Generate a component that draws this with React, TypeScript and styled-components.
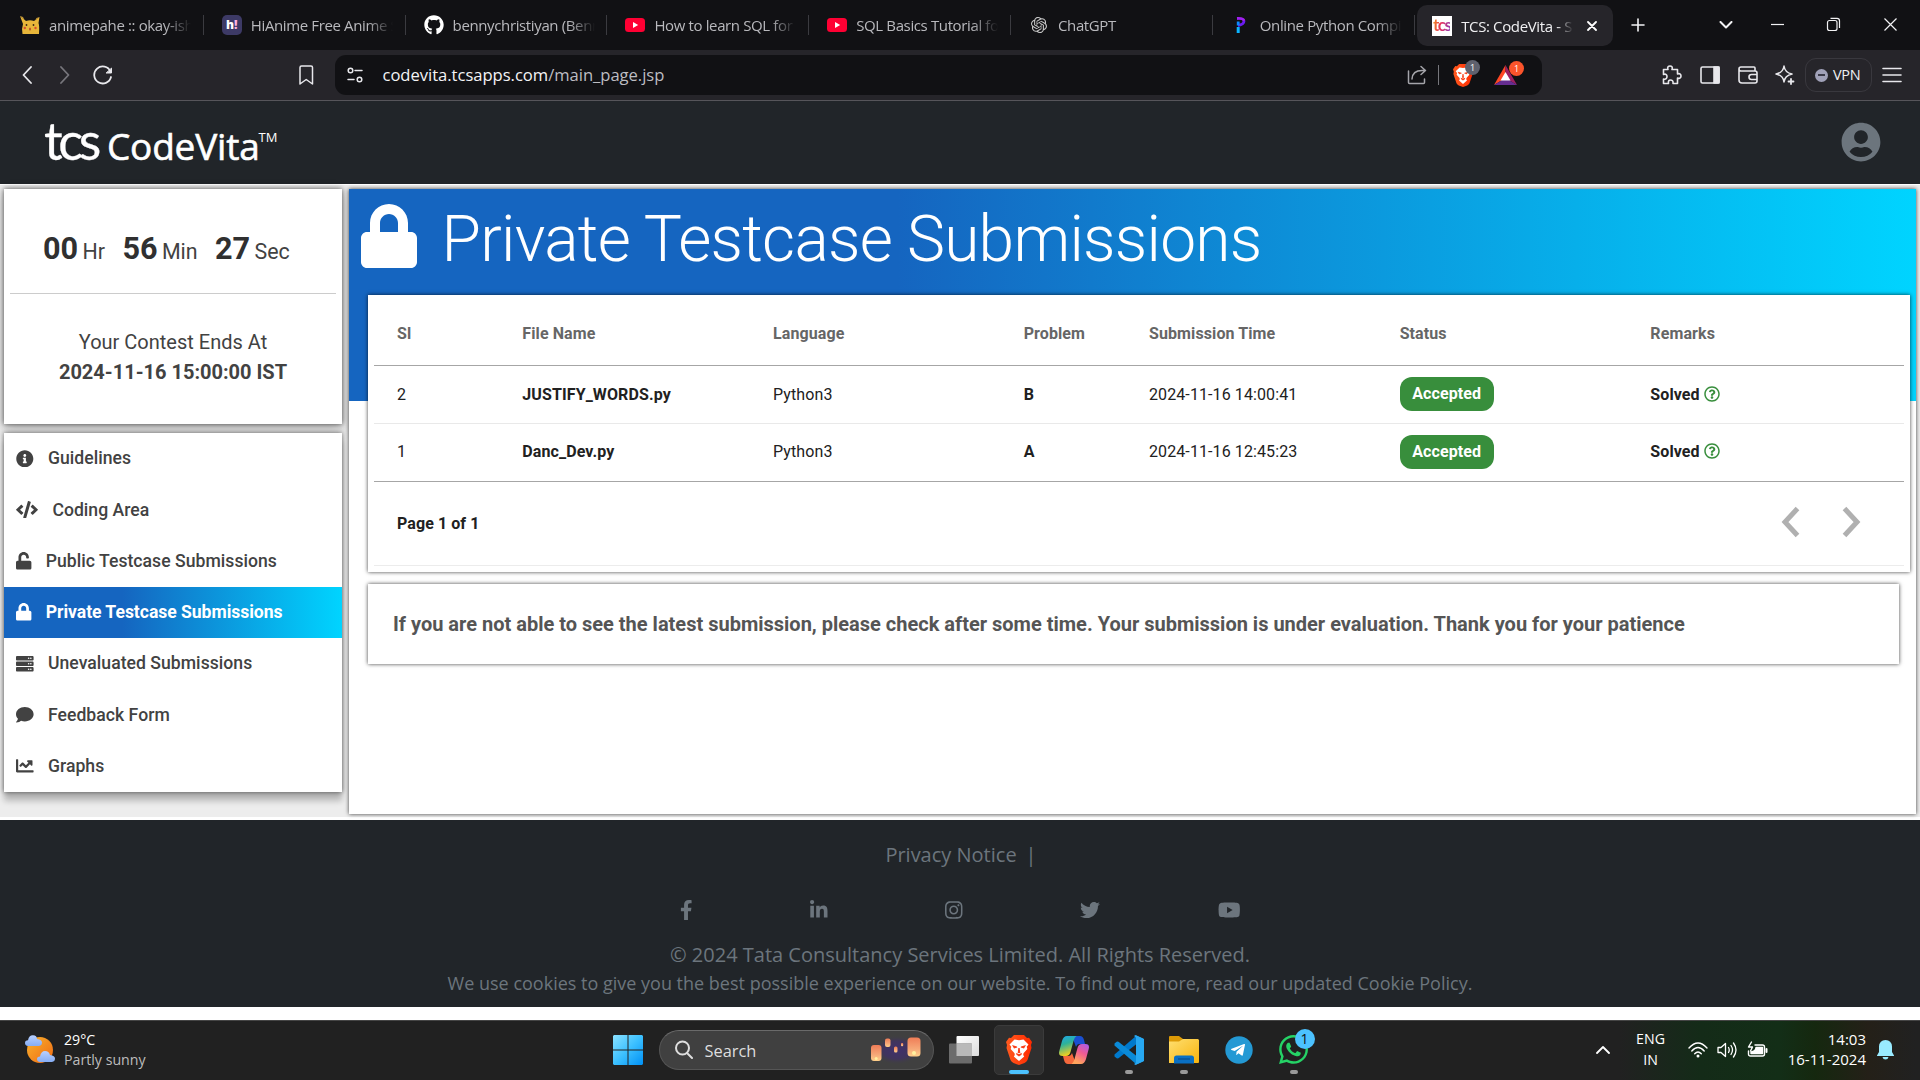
import React from 'react';
import styled, { createGlobalStyle, css } from 'styled-components';
import {
  FaInfoCircle, FaCode, FaUnlock, FaLock, FaServer, FaComment, FaChartLine,
  FaFacebookF, FaLinkedinIn, FaInstagram, FaTwitter, FaYoutube, FaGithub,
  FaUserCircle, FaRegQuestionCircle, FaTelegramPlane, FaWhatsapp,
} from 'react-icons/fa';
import { SiOpenai } from 'react-icons/si';

const UI = '"Open Sans", "Noto Sans", sans-serif';
const BLUE = 'linear-gradient(90deg, #1565c0 0%, #1565c0 35%, #00d4ff 100%)';

const Global = createGlobalStyle`
  * { box-sizing: border-box; }
  html, body { margin: 0; padding: 0; background: #fff; }
  body { font-family: Roboto, sans-serif; overflow: hidden; }
  svg { display: block; flex: none; }
`;

const Screen = styled.div`
  width: 1920px;
  height: 1080px;
  display: flex;
  flex-direction: column;
  overflow: hidden;
`;

/* ---------- browser: tab strip ---------- */
const TabStrip = styled.div`
  height: 50px;
  background: #111114;
  display: flex;
  align-items: center;
  padding-left: 2px;
  flex: none;
`;
const Tab = styled.div<{ $active?: boolean }>`
  width: 201.8px;
  height: 20px;
  padding-left: 18px;
  display: flex;
  align-items: center;
  gap: 9px;
  border-right: 1px solid #3b3b40;
  flex: none;
  ${p => p.$active && css`
    width: 196px;
    height: 41px;
    margin: 1px 0 0 2.600px;
    padding-left: 15px;
    border: 0;
    border-radius: 10px;
    background: #26252a;
  `}
`;
const Favicon = styled.span`
  width: 20px;
  height: 20px;
  display: grid;
  place-items: center;
  color: #fff;
  flex: none;
`;
const TabTitle = styled.span<{ $active?: boolean }>`
  font: 400 15px/22px ${UI};
  letter-spacing: -0.37px;
  color: ${p => (p.$active ? '#f0f0f2' : '#b9b9bd')};
  white-space: nowrap;
  overflow: hidden;
  width: ${p => (p.$active ? 117 : 145)}px;
  mask-image: linear-gradient(90deg, #000 ${p => (p.$active ? 82 : 80)}%, transparent ${p => (p.$active ? 96 : 98)}%);
`;
const HiBadge = styled.span`
  width: 20px;
  height: 20px;
  border-radius: 5px;
  background: #3d3a66;
  color: #fff;
  font: 800 12px/19px ${UI};
  text-align: center;
  i { font-style: normal; color: #ffb3e0; }
`;
const TcsBadge = styled.span`
  width: 20px;
  height: 20px;
  background: #fff;
  display: grid;
  place-items: center;
  span {
    font: 700 17px/18px Lato, sans-serif;
    letter-spacing: -1.5px;
    margin: -1px 0 0 -1px;
    color: transparent;
    background: linear-gradient(100deg, #f39c12, #e8305a 45%, #8a3ab9);
    background-clip: text;
  }
`;
const WindowControls = styled.div`
  display: flex;
  align-items: center;
  margin-left: 15px;
  color: #f2f2f4;
`;
const CaptionButtons = styled.div`
  margin-left: -34px;
`;
const Slot = styled.span<{ $w: number; $icon?: number }>`
  width: ${p => p.$w}px;
  display: grid;
  place-items: center;
  flex: none;
  ${p => p.$icon && css`svg { width: ${p.$icon}px; height: 20px; }`}
`;

/* ---------- browser: toolbar ---------- */
const Toolbar = styled.div`
  height: 51px;
  background: #26252a;
  border-bottom: 1px solid #56555a;
  display: flex;
  align-items: center;
  padding-left: 9px;
  color: #e8e8ec;
  flex: none;
`;
const UrlBar = styled.div`
  width: 1207px;
  height: 40px;
  margin-left: 3px;
  border-radius: 11px;
  background: #111114;
  display: flex;
  align-items: center;
  padding: 0 22px 0 12px;
`;
const Url = styled.span`
  font: 400 16.6px/24px ${UI};
  letter-spacing: -0.03px;
  margin: 0 auto 0 19.500px;
  color: #bdbdc2;
  b { font-weight: 400; color: #f4f4f6; }
`;
const BarRule = styled.span`
  width: 1px;
  height: 20px;
  margin: 0 14px 0 11px;
  background: #77777c;
`;
const BadgeHost = styled.span<{ $gap?: number }>`
  position: relative;
  margin-left: ${p => p.$gap ?? 0}px;
  margin-right: 3px;
`;
const CountBadge = styled.span<{ $bg: string }>`
  position: absolute;
  top: -4px;
  right: -7px;
  width: 15px;
  height: 15px;
  border-radius: 8px;
  background: ${p => p.$bg};
  color: #fff;
  font: 400 9px/15px ${UI};
  text-align: center;
`;
const Actions = styled.div`
  display: flex;
  align-items: center;
  margin-left: 117px;
`;
const VpnPill = styled.div`
  width: 67px;
  height: 34px;
  margin: 0 10px 0 -5px;
  border: 1px solid #39383e;
  border-radius: 11px;
  display: flex;
  align-items: center;
  gap: 5px;
  padding-left: 9px;
  font: 400 14.500px/20px ${UI};
  letter-spacing: -0.3px;
  color: #f0f0f3;
`;
const VpnDot = styled.i`
  width: 13px;
  height: 13px;
  border-radius: 50%;
  background: #a0a1b8;
  display: grid;
  place-items: center;
  &::after { content: ''; width: 7px; height: 2px; background: #3a3a48; }
`;

/* ---------- site header ---------- */
const SiteHeader = styled.header`
  height: 83px;
  background: #212529;
  display: flex;
  align-items: center;
  justify-content: space-between;
  padding: 0 39px 0 44px;
  flex: none;
  > svg { margin-top: -2px; }
`;
const Logo = styled.div`
  height: 83px;
  display: flex;
  align-items: baseline;
  padding-top: 9px;
  color: #fff;
`;
const LogoTcs = styled.span`
  font: 400 52px/60px Lato, sans-serif;
  letter-spacing: -4.3px;
  width: 63px;
  -webkit-text-stroke: 0.3px #fff;
`;
const LogoName = styled.span`
  font: 500 37px/60px ${UI};
  letter-spacing: -0.2px;
  -webkit-text-stroke: 0.6px #fff;
`;
const LogoTm = styled.sup`
  font: 400 13px/13px ${UI};
  align-self: flex-start;
  margin: 21px 0 0 -1px;
`;

/* ---------- body ---------- */
const Body = styled.main`
  height: 636px;
  background: #ededed;
  border-top: 1px solid #fff;
  border-bottom: 3px solid #fff;
  display: flex;
  padding: 4px 4px 3px;
  gap: 7px;
  flex: none;
`;
const Sidebar = styled.aside`
  width: 338px;
  display: flex;
  flex-direction: column;
  gap: 9px;
`;
const TimerCard = styled.section`
  height: 235px;
  background: #fff;
  padding: 0 6px;
  color: #424242;
  box-shadow: 0 0 5px rgba(0, 0, 0, 0.6), 0 4px 12px rgba(0, 0, 0, 0.28);
`;
const Countdown = styled.div`
  height: 105px;
  border-bottom: 1px solid #ccc;
  display: flex;
  align-items: baseline;
  padding: 42px 0 0 33px;
  line-height: 36px;
`;
const Digits = styled.b`
  font-weight: 700;
  font-size: 30.6px;
  color: #303030;
`;
const Unit = styled.span`
  font-size: 21.4px;
  margin: 0 17.4px 0 4.4px;
`;
const EndsAt = styled.div`
  padding-top: 33px;
  font-size: 20px;
  line-height: 30px;
  text-align: center;
  b { display: block; }
`;
const Nav = styled.nav`
  background: #fff;
  box-shadow: 0 0 5px rgba(0, 0, 0, 0.6), 0 9px 6px rgba(0, 0, 0, 0.22);
`;
const NavItem = styled.a<{ $active?: boolean; $iw: number }>`
  height: 51.25px;
  display: flex;
  align-items: center;
  gap: 14.2px;
  padding: 0 0 0.6px 12.2px;
  font-size: 17.6px;
  font-weight: ${p => (p.$active ? 700 : 500)};
  letter-spacing: ${p => (p.$active ? -0.05 : 0.03)}px;
  color: ${p => (p.$active ? '#fff' : '#424242')};
  background: ${p => (p.$active ? BLUE : 'transparent')};
  svg { height: 17.6px; width: ${p => p.$iw}px; }
`;

const Content = styled.section`
  width: 1567px;
  height: 625px;
  background: linear-gradient(#fff, #fff) 0 212px / 100% 100% no-repeat, ${BLUE};
  box-shadow: 0 0 4px rgba(0, 0, 0, 0.75);
  padding-left: 19px;
`;
const Banner = styled.h1`
  height: 106px;
  margin: 0 0 0 -7px;
  padding-top: 16px;
  display: flex;
  gap: 24.5px;
  color: #fff;
  font: 300 64px/70px Roboto, sans-serif;
  letter-spacing: -0.72px;
  svg { width: 56px; height: 64px; margin-top: -1px; }
`;
const cardShadow = css`
  background: #fff;
  box-shadow: 0 0 4px rgba(0, 0, 0, 0.75);
`;
const TableCard = styled.div`
  width: 1542px;
  height: 277px;
  padding: 0 6px;
  ${cardShadow}
`;
const Row = styled.div<{ $h: number; $line: string; $lift?: number }>`
  height: ${p => p.$h}px;
  border-bottom: 1px solid ${p => p.$line};
  display: grid;
  grid-template-columns: 1fr 2fr 2fr 1fr 2fr 2fr 2fr;
  align-items: center;
  padding: 0 3px 1px 23px;
  font-size: 16px;
  letter-spacing: 0.1px;
  color: #212121;
  > *:not(:nth-child(6)) { margin-bottom: ${p => p.$lift ?? 0}px; }
`;
const Head = styled(Row)`
  font-weight: 700;
  color: #666;
  padding-top: 6px;
  padding-bottom: 0;
`;
const Strong = styled.b`
  display: flex;
  align-items: center;
  gap: 4px;
  font-weight: 700;
  svg { color: #388e3c; width: 16px; height: 16px; }
`;
const Accepted = styled.span`
  justify-self: start;
  width: 94px;
  height: 34px;
  border-radius: 12px;
  background: #388e3c;
  color: #fff;
  font-weight: 700;
  line-height: 34.6px;
  text-align: center;
`;
const Pager = styled.div`
  height: 84px;
  border-bottom: 1px solid #ececec;
  display: flex;
  align-items: center;
  justify-content: space-between;
  padding: 0 43px 0 23px;
  font-size: 16px;
  letter-spacing: 0.08px;
  font-weight: 700;
  color: #212121;
`;
const Arrows = styled.div`
  display: flex;
  gap: 42px;
  padding-bottom: 3px;
`;
const Notice = styled.div`
  width: 1531px;
  height: 80px;
  margin-top: 12px;
  padding-left: 25px;
  font-size: 20px;
  font-weight: 700;
  line-height: 80px;
  color: #555;
  ${cardShadow}
`;

/* ---------- footer ---------- */
const Footer = styled.footer`
  height: 187px;
  background: #212529;
  color: #6c757d;
  font-family: "Open Sans", sans-serif;
  text-align: center;
  padding-top: 20px;
  flex: none;
`;
const FooterLine = styled.p<{ $size: number; $h: number }>`
  margin: 0;
  font-size: ${p => p.$size}px;
  line-height: ${p => p.$h}px;
  span { margin: 0 -2px 0 9px; }
`;
const Socials = styled.div`
  display: flex;
  justify-content: center;
  align-items: center;
  height: 50px;
  margin: 15px 0 5px;
`;

/* ---------- taskbar ---------- */
const Taskbar = styled.div`
  height: 60px;
  margin-top: 13px;
  padding-bottom: 2px;
  border-top: 1px solid #454545;
  background: linear-gradient(90deg, #212121 0 1620px, #142b18 1700px, #132e17 1780px, #15280f 1815px, #242018 1868px, #212121 1915px);
  display: flex;
  align-items: center;
  font-family: ${UI};
  color: #fff;
  flex: none;
`;
const Weather = styled.div`
  width: 612.5px;
  display: flex;
  align-items: center;
  padding-left: 24px;
  gap: 8px;
`;
const TwoLine = styled.div<{ $size: number; $line?: number; $dim?: boolean }>`
  font-size: ${p => p.$size}px;
  line-height: ${p => p.$line ?? 20}px;
  div + div { color: ${p => (p.$dim ? '#bdbdbd' : 'inherit')}; }
`;
const Language = styled(TwoLine)`
  margin-left: 26px;
  text-align: center;
`;
const Clock = styled(TwoLine)`
  width: 98px;
  padding-bottom: 1px;
  text-align: right;
`;
const SearchBox = styled.div`
  width: 275px;
  height: 40px;
  margin: 0 5px 0 16px;
  border: 1px solid #555;
  border-top-color: #6a6a6a;
  border-radius: 20px;
  background: #404040;
  display: flex;
  align-items: center;
  padding: 0 12px 0 14px;
  font-size: 16.4px;
  color: #dedede;
  span { margin: 1px auto 0 12px; }
`;
const AppSlot = styled.div<{ $mark?: 'active' | 'open' }>`
  position: relative;
  width: 50px;
  height: 50px;
  margin-right: 5px;
  display: grid;
  place-items: center;
  border-radius: 5px;
  flex: none;
  ${p => p.$mark === 'active' && css`background: #303030; border: 1px solid #3b3b3b;`}
  &::after {
    content: ${p => (p.$mark ? "''" : 'none')};
    position: absolute;
    bottom: ${p => (p.$mark === 'active' ? 0 : 1)}px;
    left: 50%;
    width: ${p => (p.$mark === 'active' ? 20 : 8)}px;
    height: 4px;
    transform: translateX(-50%);
    border-radius: 2px;
    background: ${p => (p.$mark === 'active' ? '#4cc2ff' : '#9a9a9a')};
  }
`;
const AppBadge = styled.span`
  position: absolute;
  top: 4px;
  right: 4px;
  width: 20px;
  height: 20px;
  border-radius: 50%;
  background: #4cc2ff;
  color: #111;
  font-size: 14px;
  line-height: 20px;
  text-align: center;
`;
const Tray = styled.div`
  margin-left: auto;
  display: flex;
  align-items: center;
  padding-right: 26px;
`;
const TrayIcons = styled.div`
  display: flex;
  align-items: center;
  gap: 9px;
  margin-left: 23px;
`;
const Bell = styled.svg`
  margin-left: 11px;
`;

/* ---------- drawings ---------- */
const line = { fill: 'none', stroke: 'currentColor', strokeLinecap: 'round', strokeLinejoin: 'round' } as const;

const Pikachu = () => (
  <svg width="20" height="18" viewBox="0 0 20 18">
    <path d="M0 0l6 5q4-1.500 8 0l5.500-4-1 6q1 2 .500 11H2.500Q1.500 12 3 8z" fill="#e8b63a" />
    <path d="M0 0l3 1 1.500 3zM19.500 1l-3 1-1.500 3z" fill="#c79a3a" />
    <circle cx="6.500" cy="9" r=".9" fill="#3b2714" /><circle cx="13.500" cy="9" r=".9" fill="#3b2714" />
    <circle cx="4.800" cy="12" r="1.200" fill="#d8502c" /><circle cx="15.500" cy="12" r="1.200" fill="#d8502c" />
    <ellipse cx="10" cy="13" rx="1" ry="1.500" fill="#b8502c" />
  </svg>
);
const TubeIcon = () => (
  <svg width="20" height="14" viewBox="0 0 20 14"><rect width="20" height="14" rx="3.500" fill="#ff0033" /><path d="M8 4l5.200 3L8 10z" fill="#fff" /></svg>
);
const Programiz = () => (
  <svg width="10" height="16" viewBox="0 0 10 16">
    <path d="M1 1.500q6.500-.500 7 2.500" fill="none" stroke="#a020f0" strokeWidth="2.800" />
    <path d="M8 4q0 3.500-6 4.500" fill="none" stroke="#6a1cf0" strokeWidth="2.800" />
    <path d="M2.200 4.500v4" stroke="#0a8aff" strokeWidth="2.800" /><path d="M2.200 10v6" stroke="#0ab4ff" strokeWidth="3" />
  </svg>
);
const Lion = ({ w, h }: { w: number; h: number }) => (
  <svg width={w} height={h} viewBox="0 0 26 30">
    <defs><linearGradient id="lion" x2="1"><stop stopColor="#ff5a1f" /><stop offset="1" stopColor="#ff2a00" /></linearGradient></defs>
    <path d="M8 0h10l3 3 2-.300L26 7l-1 3 .500 3-4 12q-1 2-3 3l-5.500 2-5.500-2q-2-1-3-3L.500 13 1 10 0 7l3-4.300L5 3z" fill="url(#lion)" />
    <path d="M8.500 4.500L13 5.200l4.500-.700 5 5-1.800 2.300.600 2.200-3.800 4.200-.300 1.800 1 1.500-5.200 4.500-5.200-4.500 1-1.500-.300-1.800L4.700 14l.600-2.200L3.500 9.500z" fill="#fff" />
    <path d="M6 10l5 1.500.300 1-3.300 1zM20 10l-5 1.500-.300 1 3.300 1zM10 18l3 1 3-1-.500 1.800-2.500 1.700-2.500-1.700zM12.300 13h1.400l.600 5h-2.600z" fill="#f9401a" />
  </svg>
);
const Bat = () => (
  <svg width="23" height="20" viewBox="0 0 23 20">
    <path d="M11.500 0L0 20l11.500-7z" fill="#ff4724" /><path d="M11.500 0L23 20l-11.500-7z" fill="#9e1f63" />
    <path d="M0 20h23l-11.500-7z" fill="#662d91" /><path d="M11.500 7L6.500 15.500h10z" fill="#fff" />
  </svg>
);
const WinLogo = () => (
  <svg width="30" height="30" viewBox="0 0 30 30">
    <defs><linearGradient id="win" x2="1" y2="1"><stop stopColor="#8be2ff" /><stop offset=".5" stopColor="#3cc0ff" /><stop offset="1" stopColor="#0090f5" /></linearGradient></defs>
    <path d="M1 0h13.500v14.500H0V1zM15.500 0H29l1 1v13.500H15.500zM0 15.500h14.500V30H1l-1-1zM15.500 15.500H30V29l-1 1H15.500z" fill="url(#win)" />
  </svg>
);
const Lanterns = () => (
  <svg width="52" height="30" viewBox="0 0 52 30">
    <defs>
      <linearGradient id="lan" y2="1" x2="0"><stop stopColor="#ef7d57" /><stop offset=".6" stopColor="#f6a878" /><stop offset="1" stopColor="#ffd08a" /></linearGradient>
      <radialGradient id="glow"><stop stopColor="#40306c" /><stop offset=".6" stopColor="#40345c" /><stop offset="1" stopColor="#404040" stopOpacity="0" /></radialGradient>
    </defs>
    <ellipse cx="28" cy="15" rx="24" ry="15" fill="url(#glow)" />
    <rect x="2" y="10" width="10.500" height="16" rx="3" fill="url(#lan)" />
    <rect x="16" y="3.500" width="5.500" height="8.500" rx="2" fill="url(#lan)" />
    <rect x="25" y="11.500" width="3.500" height="6" rx="1.500" fill="url(#lan)" />
    <rect x="32" y="8" width="2.200" height="3.200" rx="1" fill="url(#lan)" />
    <rect x="38.500" y="2.500" width="13" height="19" rx="3.500" fill="url(#lan)" />
    <circle cx="7.200" cy="23.500" r="1.500" fill="#fff0a0" /><circle cx="45" cy="18" r="2" fill="#fff0a0" />
  </svg>
);
const TaskView = () => (
  <svg width="30" height="28" viewBox="0 0 30 28">
    <defs><linearGradient id="tv" x2="1" y2="1"><stop stopColor="#fff" /><stop offset="1" stopColor="#dcdcdc" /></linearGradient></defs>
    <rect x="7.500" width="22.500" height="20" rx="1" fill="url(#tv)" /><rect y="7.500" width="23" height="20" rx="1" fill="#6c6c6c" />
    <rect x="7.500" y="7.500" width="15.500" height="12.500" fill="#b9b9b9" />
  </svg>
);
const Copilot = () => (
  <svg width="30" height="28" viewBox="0 0 30 28">
    <defs>
      <linearGradient id="cp1" x2=".3" y2="1"><stop stopColor="#1fa6ee" /><stop offset=".45" stopColor="#2cb29a" /><stop offset="1" stopColor="#f0d020" /></linearGradient>
      <linearGradient id="cp2" x1="1" x2=".5" y2="1"><stop stopColor="#a35cf0" /><stop offset=".5" stopColor="#ee5a94" /><stop offset="1" stopColor="#ffa45c" /></linearGradient>
    </defs>
    <path d="M13 0h8q3 0 4 4l1 4h-6q-2 0-3 3z" fill="#1a4fd0" />
    <path d="M17 28H9q-3 0-4-4l-1-4h6q2 0 3-3z" fill="#f4683c" />
    <path d="M8 0h9.500q-2 1-3 5l-3 11q-1 4-4.500 4H3.500Q-1 20 .300 15L3 5q1.500-5 5-5z" fill="url(#cp1)" />
    <path d="M22 28h-9.500q2-1 3-5l3-11q1-4 4.500-4h3.500q4.500 0 3.200 5L27 23q-1.500 5-5 5z" fill="url(#cp2)" />
  </svg>
);
const VsCode = () => (
  <svg width="30" height="30" viewBox="0 0 30 30">
    <path d="M22 1L0.500 19.500v2L3 23.500l1.500-.200L22.500 9z" fill="#0079cc" />
    <path d="M22 29L.500 10.500v-2L3 6.500l1.500.200L22.500 21z" fill="#0a8ad8" />
    <path d="M21.500 0L29 3.500l1 1.200v20.600l-1 1.200L21.500 30l-1.500-1 2.500-1.500V3L20 1z" fill="#27a8f2" />
    <path d="M22 .500v29l8-3.500V4z" fill="#27a8f2" />
  </svg>
);
const Folder = () => (
  <svg width="30" height="28" viewBox="0 0 30 28">
    <defs><linearGradient id="fo" x2="1" y2="1"><stop stopColor="#ffdf70" /><stop offset="1" stopColor="#f8b40e" /></linearGradient></defs>
    <path d="M0 1q0-1 1-1h9l4 3v6H0z" fill="#dd9a06" /><path d="M0 5.500h10l4-2.500h15l1 1v22.500l-1 .500H1L0 27z" fill="url(#fo)" />
    <path d="M5 27.500V22q0-2.500 2.500-2.500h15Q25 19.500 25 22v5.500z" fill="#0a70c4" /><path d="M9 23h12" stroke="#0a4c8c" strokeWidth="1.200" />
  </svg>
);
const WeatherIcon = () => (
  <svg width="32" height="30" viewBox="0 0 32 30">
    <defs>
      <linearGradient id="sun" x2="1" y2="1"><stop stopColor="#f9b22c" /><stop offset="1" stopColor="#ef6a14" /></linearGradient>
      <linearGradient id="cl" x2="0" y2="1"><stop stopColor="#b8d0ff" /><stop offset="1" stopColor="#86adf4" /></linearGradient>
    </defs>
    <circle cx="16" cy="15" r="13" fill="url(#sun)" />
    <path d="M4 11q-3-.500-3-3t3-2.700Q5 0 9 .200T13 4q5 .500 5 3.500T15 11z" fill="url(#cl)" />
    <path d="M16 27q-3-.500-3-3t3-2.500Q17 16 21 16t5 4q5 .500 5 3.500T28 27z" fill="url(#cl)" />
  </svg>
);

const tabs: { icon: React.ReactNode; title: string }[] = [
  { icon: <Pikachu />, title: 'animepahe :: okay-ish' },
  { icon: <HiBadge>h<i>!</i></HiBadge>, title: 'HiAnime Free Anime S' },
  { icon: <FaGithub size={20} />, title: 'bennychristiyan (Benn' },
  { icon: <TubeIcon />, title: 'How to learn SQL for' },
  { icon: <TubeIcon />, title: 'SQL Basics Tutorial fo' },
  { icon: <SiOpenai size={16} color="#c9c9c9" />, title: 'ChatGPT' },
  { icon: <Programiz />, title: 'Online Python Compi' },
];

const nav = [
  { icon: <FaInfoCircle />, w: 17.6, label: 'Guidelines' },
  { icon: <FaCode />, w: 22, label: 'Coding Area' },
  { icon: <FaUnlock />, w: 15.4, label: 'Public Testcase Submissions' },
  { icon: <FaLock />, w: 15.4, label: 'Private Testcase Submissions', active: true },
  { icon: <FaServer />, w: 17.6, label: 'Unevaluated Submissions' },
  { icon: <FaComment />, w: 17.6, label: 'Feedback Form' },
  { icon: <FaChartLine />, w: 17.6, label: 'Graphs' },
];

const submissions = [
  { sl: 2, file: 'JUSTIFY_WORDS.py', problem: 'B', time: '2024-11-16 14:00:41' },
  { sl: 1, file: 'Danc_Dev.py', problem: 'A', time: '2024-11-16 12:45:23' },
];

function BrowserChrome() {
  return (
    <>
      <TabStrip>
        {tabs.map(t => (
          <Tab key={t.title}><Favicon>{t.icon}</Favicon><TabTitle>{t.title}</TabTitle></Tab>
        ))}
        <Tab $active>
          <Favicon><TcsBadge><span>tcs</span></TcsBadge></Favicon>
          <TabTitle $active>TCS: CodeVita - S</TabTitle>
          <svg width="10" height="10" viewBox="0 0 10 10" {...line} stroke="#fff" strokeWidth="1.800"><path d="M1 1l8 8M9 1L1 9" /></svg>
        </Tab>
        <WindowControls>
          <Slot $w={20}><svg width="14" height="14" viewBox="0 0 14 14" {...line} strokeWidth="1.600"><path d="M7 1v12M1 7h12" /></svg></Slot>
          <Slot $w={156}><svg width="14" height="8" viewBox="0 0 14 8" {...line} strokeWidth="2"><path d="M1.500 1L7 6.500 12.500 1" /></svg></Slot>
          <CaptionButtons>
            <svg width="127" height="16" viewBox="0 0 127 16" {...line} strokeWidth="1.200" strokeLinecap="butt">
              <path d="M1 7.500h13" />
              <rect x="57.500" y="3.500" width="9.500" height="10" rx="2" /><path d="M60.500 1.300H67q2.500 0 2.500 2.500V11" />
              <path d="M114.500 1.500l12 12M126.500 1.500l-12 12" />
            </svg>
          </CaptionButtons>
        </WindowControls>
      </TabStrip>
      <Toolbar>
        <Slot $w={36}><svg width="10" height="18" viewBox="0 0 10 18" {...line} strokeWidth="1.800"><path d="M9 1L1.500 9 9 17" /></svg></Slot>
        <Slot $w={40}><svg width="10" height="18" viewBox="0 0 10 18" {...line} stroke="#77767c" strokeWidth="1.800"><path d="M1 1l7.500 8L1 17" /></svg></Slot>
        <Slot $w={36}><svg width="20" height="20" viewBox="0 0 20 20" {...line} strokeWidth="1.800"><path d="M17.500 6.500A8.500 8.500 0 1 0 18 12" /><path d="M18.500 3.500V8h-5z" fill="currentColor" strokeWidth="1" /></svg></Slot>
        <Slot $w={169} /><Slot $w={32}><svg width="16" height="20" viewBox="0 0 16 20" {...line} strokeWidth="1.500"><path d="M2 2.500Q2 1 3.500 1h9.500q1.500 0 1.500 1.500V19L8.200 14.500 2 19z" /></svg></Slot>
        <Slot $w={10} />
        <UrlBar>
          <svg width="16" height="16" viewBox="0 0 16 16" {...line} strokeWidth="1.500"><circle cx="3.500" cy="3.500" r="2.300" /><path d="M8 3.500h7M1 12.500h6" /><circle cx="12.500" cy="12.500" r="2.300" /></svg>
          <Url><b>codevita.tcsapps.com</b>/main_page.jsp</Url>
          <svg width="20" height="20" viewBox="0 0 20 20" {...line} stroke="#a5a5aa" strokeWidth="1.500"><path d="M1.500 6v11.500q0 1 1 1h14q1 0 1-1V14" /><path d="M5 14q.500-8.500 10-8.500h3.500M14 1.500l4.500 4-4.500 4" /></svg>
          <BarRule />
          <BadgeHost><Lion w={20} h={23} /><CountBadge $bg="#5f616e">1</CountBadge></BadgeHost>
          <BadgeHost $gap={18}><Bat /><CountBadge $bg="#fb542b">1</CountBadge></BadgeHost>
        </UrlBar>
        <Actions>
          <Slot $w={26}><svg width="20" height="20" viewBox="0 0 20 20" {...line} strokeWidth="1.600"><path d="M1.500 4.500H6C5 2 6.500 1 8 1s3 1 2 3.500h5.500V9c2.500-1 3.500.500 3.500 2s-1 3-3.500 2v5.500h-4.500C11.500 16 10 15 8.500 15S6 16 6.500 18.500H1.500V14c2.500 1 3.500-1 3.500-2.500S4 8.500 1.500 9.500z" /></svg></Slot>
          <Slot $w={50}><svg width="20" height="18" viewBox="0 0 20 18" {...line} strokeWidth="1.600"><rect x="1" y="1" width="18" height="16" rx="1.500" /><path d="M14 1h5v16h-5z" fill="currentColor" /></svg></Slot>
          <Slot $w={25}><svg width="20" height="18" viewBox="0 0 20 18" {...line} strokeWidth="1.600"><path d="M17 5V2q0-1-1-1H3Q1 1 1 3t2 2h14q2 0 2 2v8q0 2-2 2H4q-3 0-3-3V3M19 8.500h-5.500a2.500 2.500 0 0 0 0 5H19" /></svg></Slot>
          <Slot $w={50}><svg width="20" height="20" viewBox="0 0 20 20" {...line} strokeWidth="1.500"><path d="M9 1q.800 6.500 8 8-7.200 1.500-8 8-.800-6.500-8-8 7.200-1.500 8-8z" /><path d="M16 14v5M13.500 16.500h5" strokeWidth="1.800" /></svg></Slot>
          <VpnPill><VpnDot />VPN</VpnPill>
          <svg width="20" height="16" viewBox="0 0 20 16" {...line} strokeWidth="1.600"><path d="M1 1.500h18M1 8h18M1 14.500h18" /></svg>
        </Actions>
      </Toolbar>
    </>
  );
}

export default function App() {
  return (
    <Screen>
      <Global />
      <BrowserChrome />
      <SiteHeader>
        <Logo><LogoTcs>tcs</LogoTcs><LogoName>CodeVita</LogoName><LogoTm>TM</LogoTm></Logo>
        <FaUserCircle size={40} color="#6c757d" />
      </SiteHeader>
      <Body>
        <Sidebar>
          <TimerCard>
            <Countdown>
              <Digits>00</Digits><Unit>Hr</Unit>
              <Digits>56</Digits><Unit>Min</Unit>
              <Digits>27</Digits><Unit>Sec</Unit>
            </Countdown>
            <EndsAt>Your Contest Ends At<b>2024-11-16 15:00:00 IST</b></EndsAt>
          </TimerCard>
          <Nav>
            {nav.map(n => <NavItem key={n.label} $active={n.active} $iw={n.w}>{n.icon}{n.label}</NavItem>)}
          </Nav>
        </Sidebar>
        <Content>
          <Banner><FaLock />Private Testcase Submissions</Banner>
          <TableCard>
            <Head $h={71} $line="#a6a6a6">
              <span>Sl</span><span>File Name</span><span>Language</span><span>Problem</span>
              <span>Submission Time</span><span>Status</span><span>Remarks</span>
            </Head>
            {submissions.map((s, i) => (
              <Row key={s.sl} $h={58} $line={i === 0 ? '#e9e9e9' : '#a6a6a6'} $lift={i * 2}>
                <span>{s.sl}</span><Strong>{s.file}</Strong><span>Python3</span><Strong>{s.problem}</Strong>
                <span>{s.time}</span><Accepted>Accepted</Accepted><Strong>Solved<FaRegQuestionCircle /></Strong>
              </Row>
            ))}
            <Pager>
              Page 1 of 1
              <Arrows>
                <svg width="19" height="32" viewBox="0 0 19 32"><path d="M16.500 2.500L4 16l12.500 13.500" fill="none" stroke="#b0b0b0" strokeWidth="5" /></svg>
                <svg width="19" height="32" viewBox="0 0 19 32"><path d="M2.500 2.500L15 16 2.500 29.500" fill="none" stroke="#b0b0b0" strokeWidth="5" /></svg>
              </Arrows>
            </Pager>
          </TableCard>
          <Notice>If you are not able to see the latest submission, please check after some time. Your submission is under evaluation. Thank you for your patience</Notice>
        </Content>
      </Body>
      <Footer>
        <FooterLine $size={20} $h={30}>Privacy Notice<span>|</span></FooterLine>
        <Socials>
          <Slot $w={133} $icon={12.5}><FaFacebookF /></Slot>
          <Slot $w={133} $icon={17.5}><FaLinkedinIn /></Slot>
          <Slot $w={137} $icon={17.5}><FaInstagram /></Slot>
          <Slot $w={135} $icon={20}><FaTwitter /></Slot>
          <Slot $w={143} $icon={22.5}><FaYoutube /></Slot>
        </Socials>
        <FooterLine $size={20} $h={29}>© 2024 Tata Consultancy Services Limited. All Rights Reserved.</FooterLine>
        <FooterLine $size={18} $h={28}>We use cookies to give you the best possible experience on our website. To find out more, read our updated Cookie Policy.</FooterLine>
      </Footer>
      <Taskbar>
        <Weather>
          <WeatherIcon />
          <TwoLine $size={14.2} $dim><div>29°C</div><div>Partly sunny</div></TwoLine>
        </Weather>
        <WinLogo />
        <SearchBox>
          <svg width="19" height="19" viewBox="0 0 19 19" {...line} strokeWidth="2"><circle cx="8.500" cy="8" r="6.500" /><path d="M13 13l5 5" /></svg>
          <span>Search</span>
          <Lanterns />
        </SearchBox>
        <AppSlot><TaskView /></AppSlot>
        <AppSlot $mark="active"><Lion w={26} h={30} /></AppSlot>
        <AppSlot><Copilot /></AppSlot>
        <AppSlot $mark="open"><VsCode /></AppSlot>
        <AppSlot $mark="open"><Folder /></AppSlot>
        <AppSlot>
          <svg width="28" height="28" viewBox="0 0 28 28"><circle cx="14" cy="14" r="13.700" fill="#2499d4" /><g transform="translate(5 6)"><FaTelegramPlane size={16} color="#fff" /></g></svg>
        </AppSlot>
        <AppSlot $mark="open"><FaWhatsapp size={33} color="#25d366" /><AppBadge>1</AppBadge></AppSlot>
        <Tray>
          <svg width="14" height="9" viewBox="0 0 14 9" {...line} strokeWidth="1.800"><path d="M1 8l6-6 6 6" /></svg>
          <Language $size={14.2} $line={20.6}><div>ENG</div><div>IN</div></Language>
          <TrayIcons>
            <svg width="20" height="16" viewBox="0 0 20 16" {...line} strokeWidth="1.400"><path d="M1 6q9-10 18 0M3.800 9q6.200-7 12.400 0M6.700 11.800q3.300-3.600 6.600 0" /><circle cx="10" cy="14" r="1.500" fill="currentColor" stroke="none" /></svg>
            <svg width="21" height="18" viewBox="0 0 21 18" {...line} strokeWidth="1.300"><path d="M1 6.500h3L8.500 2.500v13L4 11.500H1zM11.500 6.500q1.500 2.500 0 5M14 4.500q3 4.500 0 9M16.500 2q5 7 0 14" /></svg>
            <svg width="21" height="18" viewBox="0 0 21 18" {...line} strokeWidth="1.400"><path d="M8 4h7.500q2 0 2 2v7q0 2-2 2h-12q-2 0-2-2v-3" /><path d="M4 12.500V11q5-1 5-4.500h6.500v6z" fill="currentColor" /><path d="M19.500 8v3" strokeWidth="2" /><path d="M4.500 1L1.500 6h4L3.500 10" /></svg>
          </TrayIcons>
          <Clock $size={15}><div>14:03</div><div>16-11-2024</div></Clock>
          <Bell width="17" height="20" viewBox="0 0 17 20"><path d="M8.500 0q6 0 6.500 6.500V12l2 3.500v.500H0v-.500L2 12V6.500Q2.500 0 8.500 0zM5.500 17h6q-.500 2.500-3 2.500t-3-2.500z" fill="#99ebff" /></Bell>
        </Tray>
      </Taskbar>
    </Screen>
  );
}
